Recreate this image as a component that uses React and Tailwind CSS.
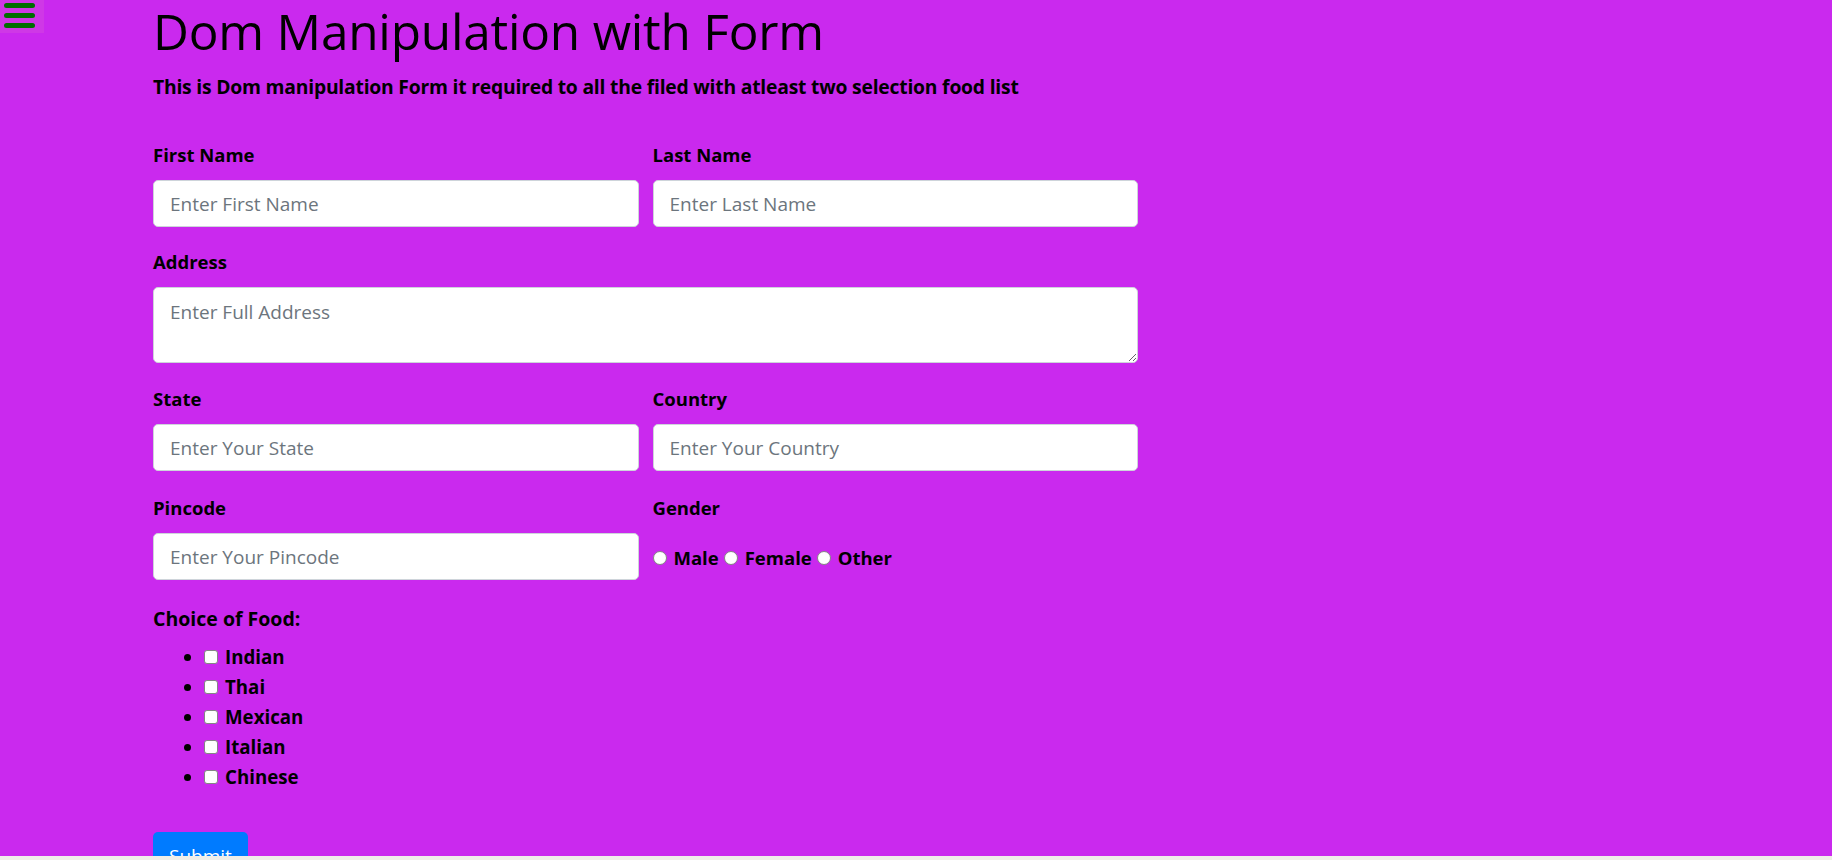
export default function App() {
  const foods = ['Indian', 'Thai', 'Mexican', 'Italian', 'Chinese']
  const inputCls =
    'block w-full h-[47px] rounded-[5px] border border-[#ced4da] bg-white px-4 text-[19px] text-[#495057] placeholder:text-[#6c757d] outline-none'
  const labelCls = 'block text-[18.5px] leading-[24px] font-bold mb-[13px]'
  const radioCls = 'appearance-none w-[14px] h-[14px] m-0 rounded-full border border-[#858585] bg-white'

  return (
    <div className="h-[860px] flex flex-col bg-[#ca29ee] overflow-hidden font-['Open_Sans',sans-serif] text-black">
      <div className="flex-1 min-h-0 flex items-start overflow-hidden">
        <div className="w-[44px] h-[33px] shrink-0 bg-[#cf38e6] flex flex-col gap-[5px] pt-[3px] pl-[4px]">
          <span className="block w-[31px] h-[5px] rounded-full bg-[#006d00]" />
          <span className="block w-[31px] h-[5px] rounded-full bg-[#006d00]" />
          <span className="block w-[31px] h-[5px] rounded-full bg-[#006d00]" />
        </div>

        <div className="ml-[109px] w-[985px] shrink-0">
          <h1 className="mt-[1px] text-[49.5px] leading-[60px] font-medium tracking-[-0.2px]">Dom Manipulation with Form</h1>
          <h6 className="mt-[14px] text-[19.3px] leading-[24px] font-bold tracking-[-0.2px]">
            This is Dom manipulation Form it required to all the filed with atleast two selection food list
          </h6>

          <form className="mt-[44px]">
            <div className="grid grid-cols-2 gap-x-[14px]">
              <div>
                <label className={labelCls}>First Name</label>
                <input className={inputCls} placeholder="Enter First Name" />
              </div>
              <div>
                <label className={labelCls}>Last Name</label>
                <input className={inputCls} placeholder="Enter Last Name" />
              </div>
            </div>

            <div className="mt-[23px]">
              <label className={labelCls}>Address</label>
              <textarea
                className="block w-full h-[76px] rounded-[5px] border border-[#ced4da] bg-white px-4 pt-[10px] pb-[4px] text-[19px] text-[#495057] placeholder:text-[#6c757d] outline-none"
                placeholder="Enter Full Address"
              />
            </div>

            <div className="mt-[24px] grid grid-cols-2 gap-x-[14px]">
              <div>
                <label className={labelCls}>State</label>
                <input className={inputCls} placeholder="Enter Your State" />
              </div>
              <div>
                <label className={labelCls}>Country</label>
                <input className={inputCls} placeholder="Enter Your Country" />
              </div>
            </div>

            <div className="mt-[25px] grid grid-cols-2 gap-x-[14px]">
              <div>
                <label className={labelCls}>Pincode</label>
                <input className={inputCls} placeholder="Enter Your Pincode" />
              </div>
              <div>
                <label className={labelCls}>Gender</label>
                <div className="h-[47px] pt-[2px] flex items-center text-[18.5px] font-bold">
                  <input type="radio" name="gender" className={radioCls + ' mr-[7px]'} />
                  <span>Male</span>
                  <input type="radio" name="gender" className={radioCls + ' ml-[5px] mr-[7px]'} />
                  <span>Female</span>
                  <input type="radio" name="gender" className={radioCls + ' ml-[5px] mr-[7px]'} />
                  <span>Other</span>
                </div>
              </div>
            </div>

            <div className="mt-[25px] text-[19.5px] leading-[27px] font-bold">Choice of Food:</div>
            <ul className="mt-[10px] list-disc pl-[51px] text-[18.7px] font-bold">
              {foods.map((f) => (
                <li key={f} className="leading-[30px]">
                  <input
                    type="checkbox"
                    className="appearance-none inline-block w-[14px] h-[14px] m-0 mr-[7px] align-[0px] rounded-[3px] border border-[#858585] bg-white"
                  />
                  {f}
                </li>
              ))}
            </ul>

            <button
              type="button"
              className="mt-[40px] h-[48px] px-4 rounded-[5px] bg-[#007bff] text-white text-[19px] leading-[30px]"
            >
              Submit
            </button>
          </form>
        </div>
      </div>
      <div className="h-[4px] shrink-0 bg-[#f0eee9]" />
    </div>
  )
}
